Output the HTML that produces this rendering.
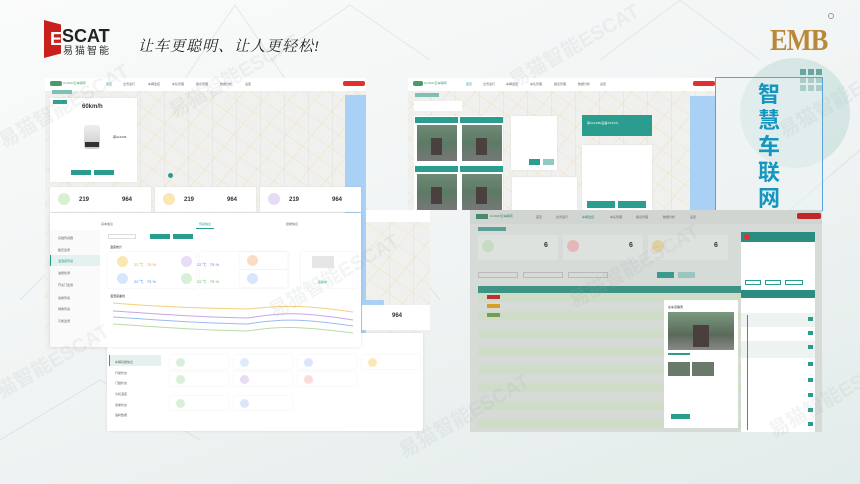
<!DOCTYPE html>
<html><head><meta charset="utf-8"><style>
*{margin:0;padding:0;box-sizing:border-box}
body{width:860px;height:484px;overflow:hidden;font-family:"Liberation Sans","Noto Sans CJK SC",sans-serif;background:linear-gradient(160deg,#fafbfb 0%,#f1f4f4 50%,#e2ecea 100%);position:relative}
.a{position:absolute}
.map{background:#f0f1ee;background-image:repeating-linear-gradient(35deg,transparent 0 14px,rgba(240,210,140,.25) 14px 15px),repeating-linear-gradient(-50deg,transparent 0 19px,rgba(235,200,130,.22) 19px 20px),repeating-linear-gradient(90deg,transparent 0 23px,rgba(200,205,215,.22) 23px 24px)}
.w{background:#fff}
.hdr{background:#fff;height:14px}
.t{font-size:3px;color:#666;white-space:nowrap}
.teal{background:#2b9d8f}
.card{background:#fff;box-shadow:0 0 2px rgba(0,0,0,.08)}
.wm{position:absolute;color:rgba(160,170,170,.13);font-size:20px;transform:rotate(-30deg);white-space:nowrap;font-weight:bold}
.ico{position:absolute;border-radius:50%}
</style></head><body>

<svg class="a" style="left:0;top:0" width="860" height="484">
<g stroke="rgba(170,180,180,.25)" stroke-width="1" fill="none">
<path d="M150 130 L235 5 L320 130"/><path d="M270 60 L350 5 L430 60"/><path d="M600 60 L680 0 L760 60"/>
<path d="M20 300 L120 200 L220 300"/><path d="M280 300 L360 200 L440 300"/><path d="M560 430 L660 330 L760 430"/>
<path d="M720 270 L860 150"/><path d="M0 440 L100 380 L200 440"/>
</g></svg>

<!-- ESCAT logo -->
<div class="a" style="left:44px;top:20px;width:17px;height:38px;background:#c8201d;clip-path:polygon(0 0,100% 12%,100% 88%,0 100%)"></div>
<div class="a" style="left:50px;top:30px;width:12px;height:18px;color:#fff;font-size:18px;font-weight:bold;line-height:18px;letter-spacing:-1px">E</div>
<div class="a" style="left:62px;top:27px;font-size:18px;font-weight:bold;color:#222;line-height:18px">SCAT</div>
<div class="a" style="left:63px;top:46px;font-size:10px;color:#333;letter-spacing:2px;line-height:11px">易猫智能</div>
<div class="a" style="left:138px;top:35px;font-size:15px;color:#222;font-family:'Liberation Serif','Noto Serif CJK SC',serif;letter-spacing:1px;font-style:italic">让车更聪明、让人更轻松!</div>

<!-- EMB -->
<div class="a" style="left:770px;top:22px;font-size:31px;font-weight:bold;color:#b98838;font-family:'Liberation Serif',serif;transform:scaleX(.85);transform-origin:left;letter-spacing:-1px">EMB</div>
<div class="a" style="left:828px;top:13px;width:6px;height:6px;border:1px solid #999;border-radius:50%"></div>

<div class="a" style="left:740px;top:58px;width:110px;height:110px;border-radius:50%;background:rgba(180,215,210,.45)"></div>
<div class="a" style="left:800px;top:69px;width:22px;height:22px;background:repeating-linear-gradient(90deg,#6aa6a0 0 6px,transparent 6px 8px);-webkit-mask:repeating-linear-gradient(0deg,#000 0 6px,transparent 6px 8px)"></div>

<!-- Panel 1 -->
<div class="a map" style="left:45px;top:78px;width:321px;height:272px"></div>
<div class="a" style="left:345px;top:95px;width:21px;height:255px;background:#a9d0f5"></div>
<div class="a hdr" style="left:45px;top:78px;width:321px;height:13px"></div>
<div class="a" style="left:50px;top:81px;width:12px;height:5px;background:#4a9b6a;border-radius:2px"></div>
<div class="a t" style="left:63px;top:81px;color:#3a9a6a">CLOUD云车联网</div>
<div class="a t" style="left:106px;top:82px;color:#2b9d8f">首页</div>
<div class="a t" style="left:123px;top:82px">全景运行</div>
<div class="a t" style="left:148px;top:82px">车辆监控</div>
<div class="a t" style="left:172px;top:82px">车队管理</div>
<div class="a t" style="left:196px;top:82px">报表管理</div>
<div class="a t" style="left:220px;top:82px">数据分析</div>
<div class="a t" style="left:245px;top:82px">设置</div>
<div class="a" style="left:343px;top:81px;width:22px;height:5px;background:#e03030;border-radius:2px"></div>
<div class="a" style="left:52px;top:90px;width:20px;height:4px;background:#7fc0b6"></div>
<div class="a card" style="left:50px;top:98px;width:87px;height:84px"></div>
<div class="a teal" style="left:53px;top:100px;width:14px;height:4px"></div>
<div class="a" style="left:82px;top:104px;font-size:6px;font-weight:bold;color:#333">60km/h</div>
<div class="a" style="left:84px;top:125px;width:16px;height:24px;background:linear-gradient(#eee,#ccc);border-radius:3px"></div>
<div class="a" style="left:85px;top:142px;width:14px;height:5px;background:#333"></div>
<div class="a t" style="left:113px;top:135px;color:#333">鄂A12345</div>
<div class="a teal" style="left:71px;top:170px;width:20px;height:5px"></div>
<div class="a teal" style="left:94px;top:170px;width:20px;height:5px"></div>
<div class="a" style="left:168px;top:173px;width:5px;height:5px;border-radius:50%;background:#2b9d8f"></div>
<div class="a card" style="left:50px;top:187px;width:101px;height:25px"></div>
<div class="a card" style="left:155px;top:187px;width:101px;height:25px"></div>
<div class="a card" style="left:260px;top:187px;width:101px;height:25px"></div>
<div class="ico" style="left:58px;top:193px;width:12px;height:12px;background:#d8f0d0"></div>
<div class="ico" style="left:163px;top:193px;width:12px;height:12px;background:#fbe6b4"></div>
<div class="ico" style="left:268px;top:193px;width:12px;height:12px;background:#e4dcf4"></div>
<div class="a" style="left:79px;top:197px;font-size:6px;font-weight:bold;color:#333">219</div>
<div class="a" style="left:122px;top:197px;font-size:6px;font-weight:bold;color:#333">964</div>
<div class="a" style="left:184px;top:197px;font-size:6px;font-weight:bold;color:#333">219</div>
<div class="a" style="left:227px;top:197px;font-size:6px;font-weight:bold;color:#333">964</div>
<div class="a" style="left:289px;top:197px;font-size:6px;font-weight:bold;color:#333">219</div>
<div class="a" style="left:332px;top:197px;font-size:6px;font-weight:bold;color:#333">964</div>

<!-- Panel middle -->
<div class="a map" style="left:366px;top:210px;width:64px;height:122px"></div>
<div class="a" style="left:366px;top:210px;width:64px;height:12px;background:#fff"></div>
<div class="a" style="left:366px;top:300px;width:18px;height:30px;background:#a9d0f5"></div>
<div class="a" style="left:362px;top:305px;width:68px;height:25px;background:#fff"></div>
<div class="a" style="left:392px;top:313px;font-size:6px;font-weight:bold;color:#333">964</div>
<div class="a" style="left:107px;top:333px;width:316px;height:98px;background:#fff;box-shadow:0 0 3px rgba(0,0,0,.1)"></div>
<div class="a" style="left:109px;top:355px;width:52px;height:11px;background:#e4f1ef;border-left:1px solid #2b9d8f"></div>
<div class="a t" style="left:115px;top:360px">车辆基础信息</div>
<div class="a t" style="left:115px;top:371px">行驶状态</div>
<div class="a t" style="left:115px;top:381px">门磁状态</div>
<div class="a t" style="left:115px;top:392px">冷机温度</div>
<div class="a t" style="left:115px;top:403px">载重状态</div>
<div class="a t" style="left:115px;top:413px">油耗数据</div>
<div class="a card" style="left:170px;top:355px;width:58px;height:14px"></div>
<div class="a card" style="left:234px;top:355px;width:58px;height:14px"></div>
<div class="a card" style="left:298px;top:355px;width:58px;height:14px"></div>
<div class="a card" style="left:362px;top:355px;width:58px;height:14px"></div>
<div class="a card" style="left:170px;top:372px;width:58px;height:14px"></div>
<div class="a card" style="left:234px;top:372px;width:58px;height:14px"></div>
<div class="a card" style="left:298px;top:372px;width:58px;height:14px"></div>
<div class="a card" style="left:170px;top:396px;width:58px;height:14px"></div>
<div class="a card" style="left:234px;top:396px;width:58px;height:14px"></div>
<div class="ico" style="left:176px;top:358px;width:9px;height:9px;background:#d8efe0"></div>
<div class="ico" style="left:240px;top:358px;width:9px;height:9px;background:#dcecfb"></div>
<div class="ico" style="left:304px;top:358px;width:9px;height:9px;background:#dce6fb"></div>
<div class="ico" style="left:368px;top:358px;width:9px;height:9px;background:#fbe8b4"></div>
<div class="ico" style="left:176px;top:375px;width:9px;height:9px;background:#d8efd8"></div>
<div class="ico" style="left:240px;top:375px;width:9px;height:9px;background:#e6dcf4"></div>
<div class="ico" style="left:304px;top:375px;width:9px;height:9px;background:#fbdcdc"></div>
<div class="ico" style="left:176px;top:399px;width:9px;height:9px;background:#d8efd8"></div>
<div class="ico" style="left:240px;top:399px;width:9px;height:9px;background:#dce6fb"></div>

<!-- Panel 1 bottom white panel -->
<div class="a" style="left:50px;top:213px;width:311px;height:134px;background:#fff;box-shadow:0 0 3px rgba(0,0,0,.12)"></div>
<div class="a t" style="left:101px;top:222px">基本信息</div>
<div class="a t" style="left:199px;top:222px;color:#2b9d8f">传感信息</div>
<div class="a" style="left:196px;top:228px;width:18px;height:1px;background:#2b9d8f"></div>
<div class="a t" style="left:286px;top:222px">控制信息</div>
<div class="a" style="left:50px;top:230px;width:50px;height:117px;background:#fafafa"></div>
<div class="a" style="left:50px;top:255px;width:50px;height:11px;background:#e4f1ef;border-left:1px solid #2b9d8f"></div>
<div class="a t" style="left:58px;top:236px">基础传感器</div>
<div class="a t" style="left:58px;top:248px">胎压监测</div>
<div class="a t" style="left:58px;top:259px;color:#2b9d8f">温湿度传感</div>
<div class="a t" style="left:58px;top:271px">油量检测</div>
<div class="a t" style="left:58px;top:283px">开关门监测</div>
<div class="a t" style="left:58px;top:296px">载重传感</div>
<div class="a t" style="left:58px;top:307px">倾角传感</div>
<div class="a t" style="left:58px;top:319px">平衡监测</div>
<div class="a" style="left:108px;top:234px;width:28px;height:5px;border:1px solid #ddd"></div>
<div class="a teal" style="left:150px;top:234px;width:20px;height:5px"></div>
<div class="a teal" style="left:173px;top:234px;width:20px;height:5px"></div>
<div class="a t" style="left:110px;top:245px;color:#333">温度统计</div>
<div class="a card" style="left:108px;top:252px;width:88px;height:36px"></div>
<div class="a card" style="left:200px;top:252px;width:88px;height:36px"></div>
<div class="a card" style="left:240px;top:252px;width:47px;height:17px"></div>
<div class="a card" style="left:240px;top:270px;width:47px;height:17px"></div>
<div class="a card" style="left:301px;top:252px;width:56px;height:36px"></div>
<div class="ico" style="left:117px;top:256px;width:11px;height:11px;background:#fbe7b0"></div>
<div class="ico" style="left:117px;top:273px;width:11px;height:11px;background:#d6e6fd"></div>
<div class="ico" style="left:181px;top:256px;width:11px;height:11px;background:#e8dcf6"></div>
<div class="ico" style="left:181px;top:273px;width:11px;height:11px;background:#d8efd8"></div>
<div class="ico" style="left:247px;top:255px;width:11px;height:11px;background:#fbdcc4"></div>
<div class="ico" style="left:247px;top:273px;width:11px;height:11px;background:#d6e6fd"></div>
<div class="a" style="left:312px;top:256px;width:22px;height:12px;background:#e6e6e6;border-radius:1px"></div>
<div class="a t" style="left:134px;top:262px;color:#e6a520;font-size:4px">22 ℃ &nbsp; 75 %</div>
<div class="a t" style="left:134px;top:279px;color:#4a8cf0;font-size:4px">22 ℃ &nbsp; 75 %</div>
<div class="a t" style="left:197px;top:262px;color:#9a6ad0;font-size:4px">22 ℃ &nbsp; 75 %</div>
<div class="a t" style="left:197px;top:279px;color:#6ab06a;font-size:4px">22 ℃ &nbsp; 75 %</div>
<div class="a t" style="left:318px;top:280px;color:#2b9d8f">运输中</div>
<div class="a t" style="left:110px;top:294px;color:#333">温湿度曲线</div>
<svg class="a" style="left:108px;top:298px" width="250" height="44" viewBox="0 0 250 44">
<path d="M5 5 C40 8 80 10 140 11 C170 8 190 6 245 14" stroke="#f4cf7a" stroke-width="1" fill="none"/>
<path d="M5 13 C40 15 80 19 140 20 C170 15 190 13 245 22" stroke="#c6a6e4" stroke-width="1" fill="none"/>
<path d="M5 19 C40 21 80 25 140 26 C170 21 190 20 245 28" stroke="#98bdf4" stroke-width="1" fill="none"/>
<path d="M5 26 C40 28 80 32 140 33 C170 28 190 28 245 35" stroke="#b8dca8" stroke-width="1" fill="none"/>
</svg>

<!-- Panel 2 -->
<div class="a map" style="left:408px;top:78px;width:307px;height:132px"></div>
<div class="a" style="left:690px;top:96px;width:25px;height:114px;background:#a9d0f5"></div>
<div class="a hdr" style="left:408px;top:78px;width:307px;height:13px"></div>
<div class="a" style="left:413px;top:81px;width:10px;height:5px;background:#4a9b6a;border-radius:2px"></div>
<div class="a t" style="left:424px;top:81px;color:#3a9a6a">CLOUD云车联网</div>
<div class="a t" style="left:466px;top:82px;color:#2b9d8f">首页</div>
<div class="a t" style="left:483px;top:82px">全景运行</div>
<div class="a t" style="left:506px;top:82px">车辆监控</div>
<div class="a t" style="left:530px;top:82px">车队管理</div>
<div class="a t" style="left:554px;top:82px">报表管理</div>
<div class="a t" style="left:578px;top:82px">数据分析</div>
<div class="a t" style="left:600px;top:82px">设置</div>
<div class="a" style="left:693px;top:81px;width:22px;height:5px;background:#e03030;border-radius:2px"></div>
<div class="a" style="left:415px;top:93px;width:24px;height:4px;background:#7fc0b6"></div>
<div class="a w" style="left:414px;top:101px;width:48px;height:10px"></div>
<div class="a" style="left:414px;top:116px;width:89px;height:94px;background:#fff"></div>
<div class="a teal" style="left:415px;top:117px;width:43px;height:6px"></div>
<div class="a teal" style="left:460px;top:117px;width:43px;height:6px"></div>
<div class="a teal" style="left:415px;top:166px;width:43px;height:6px"></div>
<div class="a teal" style="left:460px;top:166px;width:43px;height:6px"></div>
<div class="a" style="left:417px;top:125px;width:40px;height:36px;background:linear-gradient(#6f8a78 0,#5c7a64 50%,#777 100%)"></div>
<div class="a" style="left:462px;top:125px;width:40px;height:36px;background:linear-gradient(#6f8a78 0,#5c7a64 50%,#777 100%)"></div>
<div class="a" style="left:417px;top:174px;width:40px;height:36px;background:linear-gradient(#6f8a78 0,#5c7a64 50%,#777 100%)"></div>
<div class="a" style="left:462px;top:174px;width:40px;height:36px;background:linear-gradient(#6f8a78 0,#5c7a64 50%,#777 100%)"></div>
<div class="a" style="left:431px;top:138px;width:11px;height:17px;background:#4a4040"></div>
<div class="a" style="left:476px;top:138px;width:11px;height:17px;background:#4a4040"></div>
<div class="a" style="left:431px;top:187px;width:11px;height:17px;background:#4a4040"></div>
<div class="a" style="left:476px;top:187px;width:11px;height:17px;background:#4a4040"></div>
<div class="a card" style="left:511px;top:116px;width:46px;height:54px"></div>
<div class="a teal" style="left:529px;top:159px;width:11px;height:6px"></div>
<div class="a" style="left:543px;top:159px;width:11px;height:6px;background:#8fc9c0"></div>
<div class="a card" style="left:512px;top:177px;width:65px;height:33px"></div>
<div class="a card" style="left:582px;top:145px;width:70px;height:65px"></div>
<div class="a teal" style="left:582px;top:115px;width:70px;height:21px"></div>
<div class="a t" style="left:587px;top:121px;color:#fff">鄂A12345(设备XXXXX)</div>
<div class="a teal" style="left:587px;top:201px;width:28px;height:7px"></div>
<div class="a teal" style="left:618px;top:201px;width:28px;height:7px"></div>

<!-- Blue box -->
<div class="a" style="left:715px;top:77px;width:108px;height:134px;border:1.5px solid #5aa3dc;background:rgba(235,244,244,.5)"></div>
<div class="a" style="left:756px;top:80px;width:26px;font-size:22px;line-height:26px;font-weight:bold;color:#1496c0;text-align:center;font-family:'Noto Sans CJK SC',sans-serif">智<br>慧<br>车<br>联<br>网</div>

<!-- Panel 3 -->
<div class="a" style="left:470px;top:210px;width:352px;height:222px;background:#d6dbd8"></div>
<div class="a" style="left:470px;top:210px;width:352px;height:14px;background:#d0d5d2"></div>
<div class="a" style="left:476px;top:214px;width:12px;height:5px;background:#4a8a6a"></div>
<div class="a t" style="left:490px;top:214px;color:#3a7a5a">CLOUD云车联网</div>
<div class="a t" style="left:536px;top:215px">首页</div>
<div class="a t" style="left:556px;top:215px">全景运行</div>
<div class="a t" style="left:582px;top:215px;color:#2b8d7f">车辆监控</div>
<div class="a t" style="left:610px;top:215px">车队管理</div>
<div class="a t" style="left:636px;top:215px">报表管理</div>
<div class="a t" style="left:663px;top:215px">数据分析</div>
<div class="a t" style="left:690px;top:215px">设置</div>
<div class="a" style="left:797px;top:213px;width:24px;height:6px;background:#c02828;border-radius:2px"></div>
<div class="a" style="left:478px;top:227px;width:28px;height:4px;background:#5a9e94"></div>
<div class="a" style="left:478px;top:235px;width:80px;height:25px;background:#dde2df"></div>
<div class="a" style="left:563px;top:235px;width:80px;height:25px;background:#dde2df"></div>
<div class="a" style="left:648px;top:235px;width:80px;height:25px;background:#dde2df"></div>
<div class="ico" style="left:482px;top:240px;width:12px;height:12px;background:#c4dcc0"></div>
<div class="ico" style="left:567px;top:240px;width:12px;height:12px;background:#e4b8b8"></div>
<div class="ico" style="left:652px;top:240px;width:12px;height:12px;background:#e0d0a0"></div>
<div class="a" style="left:544px;top:242px;font-size:7px;font-weight:bold;color:#333">6</div>
<div class="a" style="left:629px;top:242px;font-size:7px;font-weight:bold;color:#333">6</div>
<div class="a" style="left:714px;top:242px;font-size:7px;font-weight:bold;color:#333">6</div>
<div class="a" style="left:478px;top:272px;width:40px;height:6px;border:1px solid #bbb"></div>
<div class="a" style="left:523px;top:272px;width:40px;height:6px;border:1px solid #bbb"></div>
<div class="a" style="left:568px;top:272px;width:40px;height:6px;border:1px solid #bbb"></div>
<div class="a" style="left:657px;top:272px;width:17px;height:6px;background:#3a9a8c"></div>
<div class="a" style="left:678px;top:272px;width:17px;height:6px;background:#9ac6be"></div>
<div class="a" style="left:478px;top:286px;width:280px;height:7px;background:#3e9384"></div>
<div class="a" style="left:478px;top:293px;width:280px;height:136px;background:repeating-linear-gradient(#cfdcc8 0 9px,#d6dbd8 9px 18px)"></div>
<div class="a" style="left:487px;top:295px;width:13px;height:4px;background:#c03030"></div>
<div class="a" style="left:487px;top:304px;width:13px;height:4px;background:#d8a020"></div>
<div class="a" style="left:487px;top:313px;width:13px;height:4px;background:#70a050"></div>
<div class="a" style="left:664px;top:300px;width:74px;height:128px;background:#fff"></div>
<div class="a t" style="left:668px;top:305px;color:#333">左车道偏离</div>
<div class="a" style="left:668px;top:312px;width:66px;height:38px;background:linear-gradient(#7a9a80,#5a6a5a 60%,#888)"></div>
<div class="a" style="left:693px;top:325px;width:16px;height:22px;background:#4a3e3e"></div>
<div class="a" style="left:668px;top:353px;width:22px;height:2px;background:#2b9d8f"></div>
<div class="a" style="left:668px;top:362px;width:22px;height:14px;background:#6a7a68"></div>
<div class="a" style="left:692px;top:362px;width:22px;height:14px;background:#6a7a68"></div>
<div class="a teal" style="left:671px;top:414px;width:19px;height:5px"></div>
<div class="a" style="left:741px;top:232px;width:74px;height:200px;background:#fff"></div>
<div class="a" style="left:741px;top:232px;width:74px;height:10px;background:#2b8d80"></div>
<div class="ico" style="left:744px;top:234px;width:6px;height:6px;background:#e03030"></div>
<div class="a" style="left:745px;top:280px;width:16px;height:5px;border:1px solid #2b9d8f"></div>
<div class="a" style="left:765px;top:280px;width:16px;height:5px;border:1px solid #2b9d8f"></div>
<div class="a" style="left:785px;top:280px;width:18px;height:5px;border:1px solid #2b9d8f"></div>
<div class="a" style="left:741px;top:290px;width:74px;height:8px;background:#2b8d80"></div>
<div class="a" style="left:741px;top:313px;width:74px;height:14px;background:#eef2f1"></div>
<div class="a" style="left:741px;top:341px;width:74px;height:17px;background:#eef2f1"></div>
<div class="a" style="left:747px;top:315px;width:1px;height:115px;background:#2b9d8f"></div>
<div class="a" style="left:808px;top:317px;width:5px;height:4px;background:#2b9d8f"></div>
<div class="a" style="left:808px;top:331px;width:5px;height:4px;background:#2b9d8f"></div>
<div class="a" style="left:808px;top:345px;width:5px;height:4px;background:#2b9d8f"></div>
<div class="a" style="left:808px;top:362px;width:5px;height:4px;background:#2b9d8f"></div>
<div class="a" style="left:808px;top:378px;width:5px;height:4px;background:#2b9d8f"></div>
<div class="a" style="left:808px;top:393px;width:5px;height:4px;background:#2b9d8f"></div>
<div class="a" style="left:808px;top:408px;width:5px;height:4px;background:#2b9d8f"></div>
<div class="a" style="left:808px;top:422px;width:5px;height:4px;background:#2b9d8f"></div>

<div class="wm" style="left:-10px;top:90px">易猫智能ESCAT</div>
<div class="wm" style="left:160px;top:60px">易猫智能ESCAT</div>
<div class="wm" style="left:500px;top:30px">易猫智能ESCAT</div>
<div class="wm" style="left:770px;top:80px">易猫智能ESCAT</div>
<div class="wm" style="left:-30px;top:350px">易猫智能ESCAT</div>
<div class="wm" style="left:260px;top:260px">易猫智能ESCAT</div>
<div class="wm" style="left:390px;top:400px">易猫智能ESCAT</div>
<div class="wm" style="left:560px;top:250px">易猫智能ESCAT</div>
<div class="wm" style="left:760px;top:380px">易猫智能ESCAT</div>
</body></html>
